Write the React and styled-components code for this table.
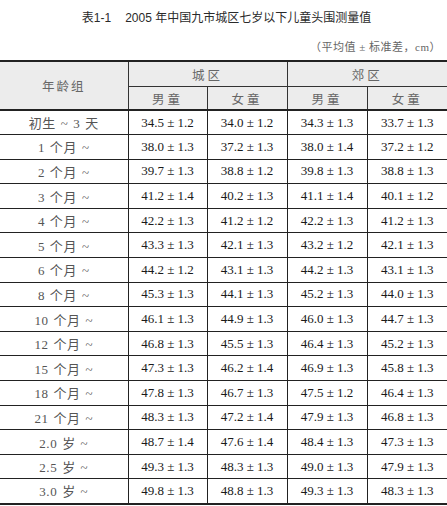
import React from "react";
import styled, { createGlobalStyle } from "styled-components";

const GlobalStyle = createGlobalStyle`
  html, body {
    margin: 0;
    padding: 0;
    background: #ffffff;
  }
  body {
    font-family: "Liberation Serif", "Noto Sans CJK SC", serif;
    color: #1c1c1c;
  }
`;

const Page = styled.div`
  width: 447px;
  height: 506px;
  overflow: hidden;
  background: #fff;
`;

const Title = styled.div`
  height: 32px;
  display: flex;
  align-items: center;
  justify-content: center;
  gap: 14px;
  font-family: "Liberation Sans", "Noto Sans CJK SC", sans-serif;
  font-size: 12px;
  color: #2a2a2a;
  padding-left: 6px;
`;

const Unit = styled.div`
  height: 28px;
  display: flex;
  align-items: center;
  justify-content: flex-end;
  padding-right: 6px;
  font-family: "Liberation Serif", "Noto Sans CJK SC", serif;
  font-size: 11px;
  color: #666;
  letter-spacing: 0.5px;
`;

const Table = styled.table`
  width: 447px;
  border-collapse: collapse;
  table-layout: fixed;
  border-top: 2px solid #222;
  border-bottom: 2px solid #222;
`;

const Head = styled.thead`
  background: #ececec;
  border-bottom: 2px solid #222;
`;

const HeadCell = styled.th`
  height: ${(p) => p.$h || 24}px;
  padding: 0;
  font-weight: normal;
  font-size: 12.5px;
  color: #666;
  letter-spacing: ${(p) => p.$spacing || 3}px;
  text-align: center;
  vertical-align: middle;
  border-left: ${(p) => (p.$first ? "none" : "1px solid #333")};
  border-bottom: ${(p) => (p.$under ? "1px solid #333" : "none")};
`;

const Row = styled.tr`
  height: 24.6px;
  border-top: 1px solid #222;
`;

const Cell = styled.td`
  padding: 0;
  font-size: 13px;
  text-align: center;
  vertical-align: middle;
  color: ${(p) => (p.$label ? "#555" : "#1a1a1a")};
  letter-spacing: ${(p) => (p.$label ? "0.6px" : "0")};
  word-spacing: ${(p) => (p.$label ? "1px" : "0")};
  border-left: ${(p) => (p.$label ? "none" : "1px solid #222")};
  white-space: nowrap;
`;

const rows = [
  ["初生 ~ 3 天", "34.5 ± 1.2", "34.0 ± 1.2", "34.3 ± 1.3", "33.7 ± 1.3"],
  ["1 个月 ~", "38.0 ± 1.3", "37.2 ± 1.3", "38.0 ± 1.4", "37.2 ± 1.2"],
  ["2 个月 ~", "39.7 ± 1.3", "38.8 ± 1.2", "39.8 ± 1.3", "38.8 ± 1.3"],
  ["3 个月 ~", "41.2 ± 1.4", "40.2 ± 1.3", "41.1 ± 1.4", "40.1 ± 1.2"],
  ["4 个月 ~", "42.2 ± 1.3", "41.2 ± 1.2", "42.2 ± 1.3", "41.2 ± 1.3"],
  ["5 个月 ~", "43.3 ± 1.3", "42.1 ± 1.3", "43.2 ± 1.2", "42.1 ± 1.3"],
  ["6 个月 ~", "44.2 ± 1.2", "43.1 ± 1.3", "44.2 ± 1.3", "43.1 ± 1.3"],
  ["8 个月 ~", "45.3 ± 1.3", "44.1 ± 1.3", "45.2 ± 1.3", "44.0 ± 1.3"],
  ["10 个月 ~", "46.1 ± 1.3", "44.9 ± 1.3", "46.0 ± 1.3", "44.7 ± 1.3"],
  ["12 个月 ~", "46.8 ± 1.3", "45.5 ± 1.3", "46.4 ± 1.3", "45.2 ± 1.3"],
  ["15 个月 ~", "47.3 ± 1.3", "46.2 ± 1.4", "46.9 ± 1.3", "45.8 ± 1.3"],
  ["18 个月 ~", "47.8 ± 1.3", "46.7 ± 1.3", "47.5 ± 1.2", "46.4 ± 1.3"],
  ["21 个月 ~", "48.3 ± 1.3", "47.2 ± 1.4", "47.9 ± 1.3", "46.8 ± 1.3"],
  ["2.0 岁 ~", "48.7 ± 1.4", "47.6 ± 1.4", "48.4 ± 1.3", "47.3 ± 1.3"],
  ["2.5 岁 ~", "49.3 ± 1.3", "48.3 ± 1.3", "49.0 ± 1.3", "47.9 ± 1.3"],
  ["3.0 岁 ~", "49.8 ± 1.3", "48.8 ± 1.3", "49.3 ± 1.3", "48.3 ± 1.3"],
];

const App = () => {
  return (
    <Page>
      <GlobalStyle />
      <Title>
        <span>表1-1</span>
        <span>2005 年中国九市城区七岁以下儿童头围测量值</span>
      </Title>
      <Unit>（平均值 ± 标准差，cm）</Unit>
      <Table>
        <colgroup>
          <col style={{ width: 128 }} />
          <col style={{ width: 79 }} />
          <col style={{ width: 80 }} />
          <col style={{ width: 80 }} />
          <col style={{ width: 80 }} />
        </colgroup>
        <Head>
          <tr>
            <HeadCell rowSpan={2} $first $spacing={2}>
              年龄组
            </HeadCell>
            <HeadCell colSpan={2} $under $h={24}>
              城区
            </HeadCell>
            <HeadCell colSpan={2} $under $h={24}>
              郊区
            </HeadCell>
          </tr>
          <tr>
            <HeadCell $h={22}>男童</HeadCell>
            <HeadCell $h={22}>女童</HeadCell>
            <HeadCell $h={22}>男童</HeadCell>
            <HeadCell $h={22}>女童</HeadCell>
          </tr>
        </Head>
        <tbody>
          {rows.map((r, i) => (
            <Row key={i}>
              {r.map((v, j) => (
                <Cell key={j} $label={j === 0}>
                  {v}
                </Cell>
              ))}
            </Row>
          ))}
        </tbody>
      </Table>
    </Page>
  );
};

export default App;
